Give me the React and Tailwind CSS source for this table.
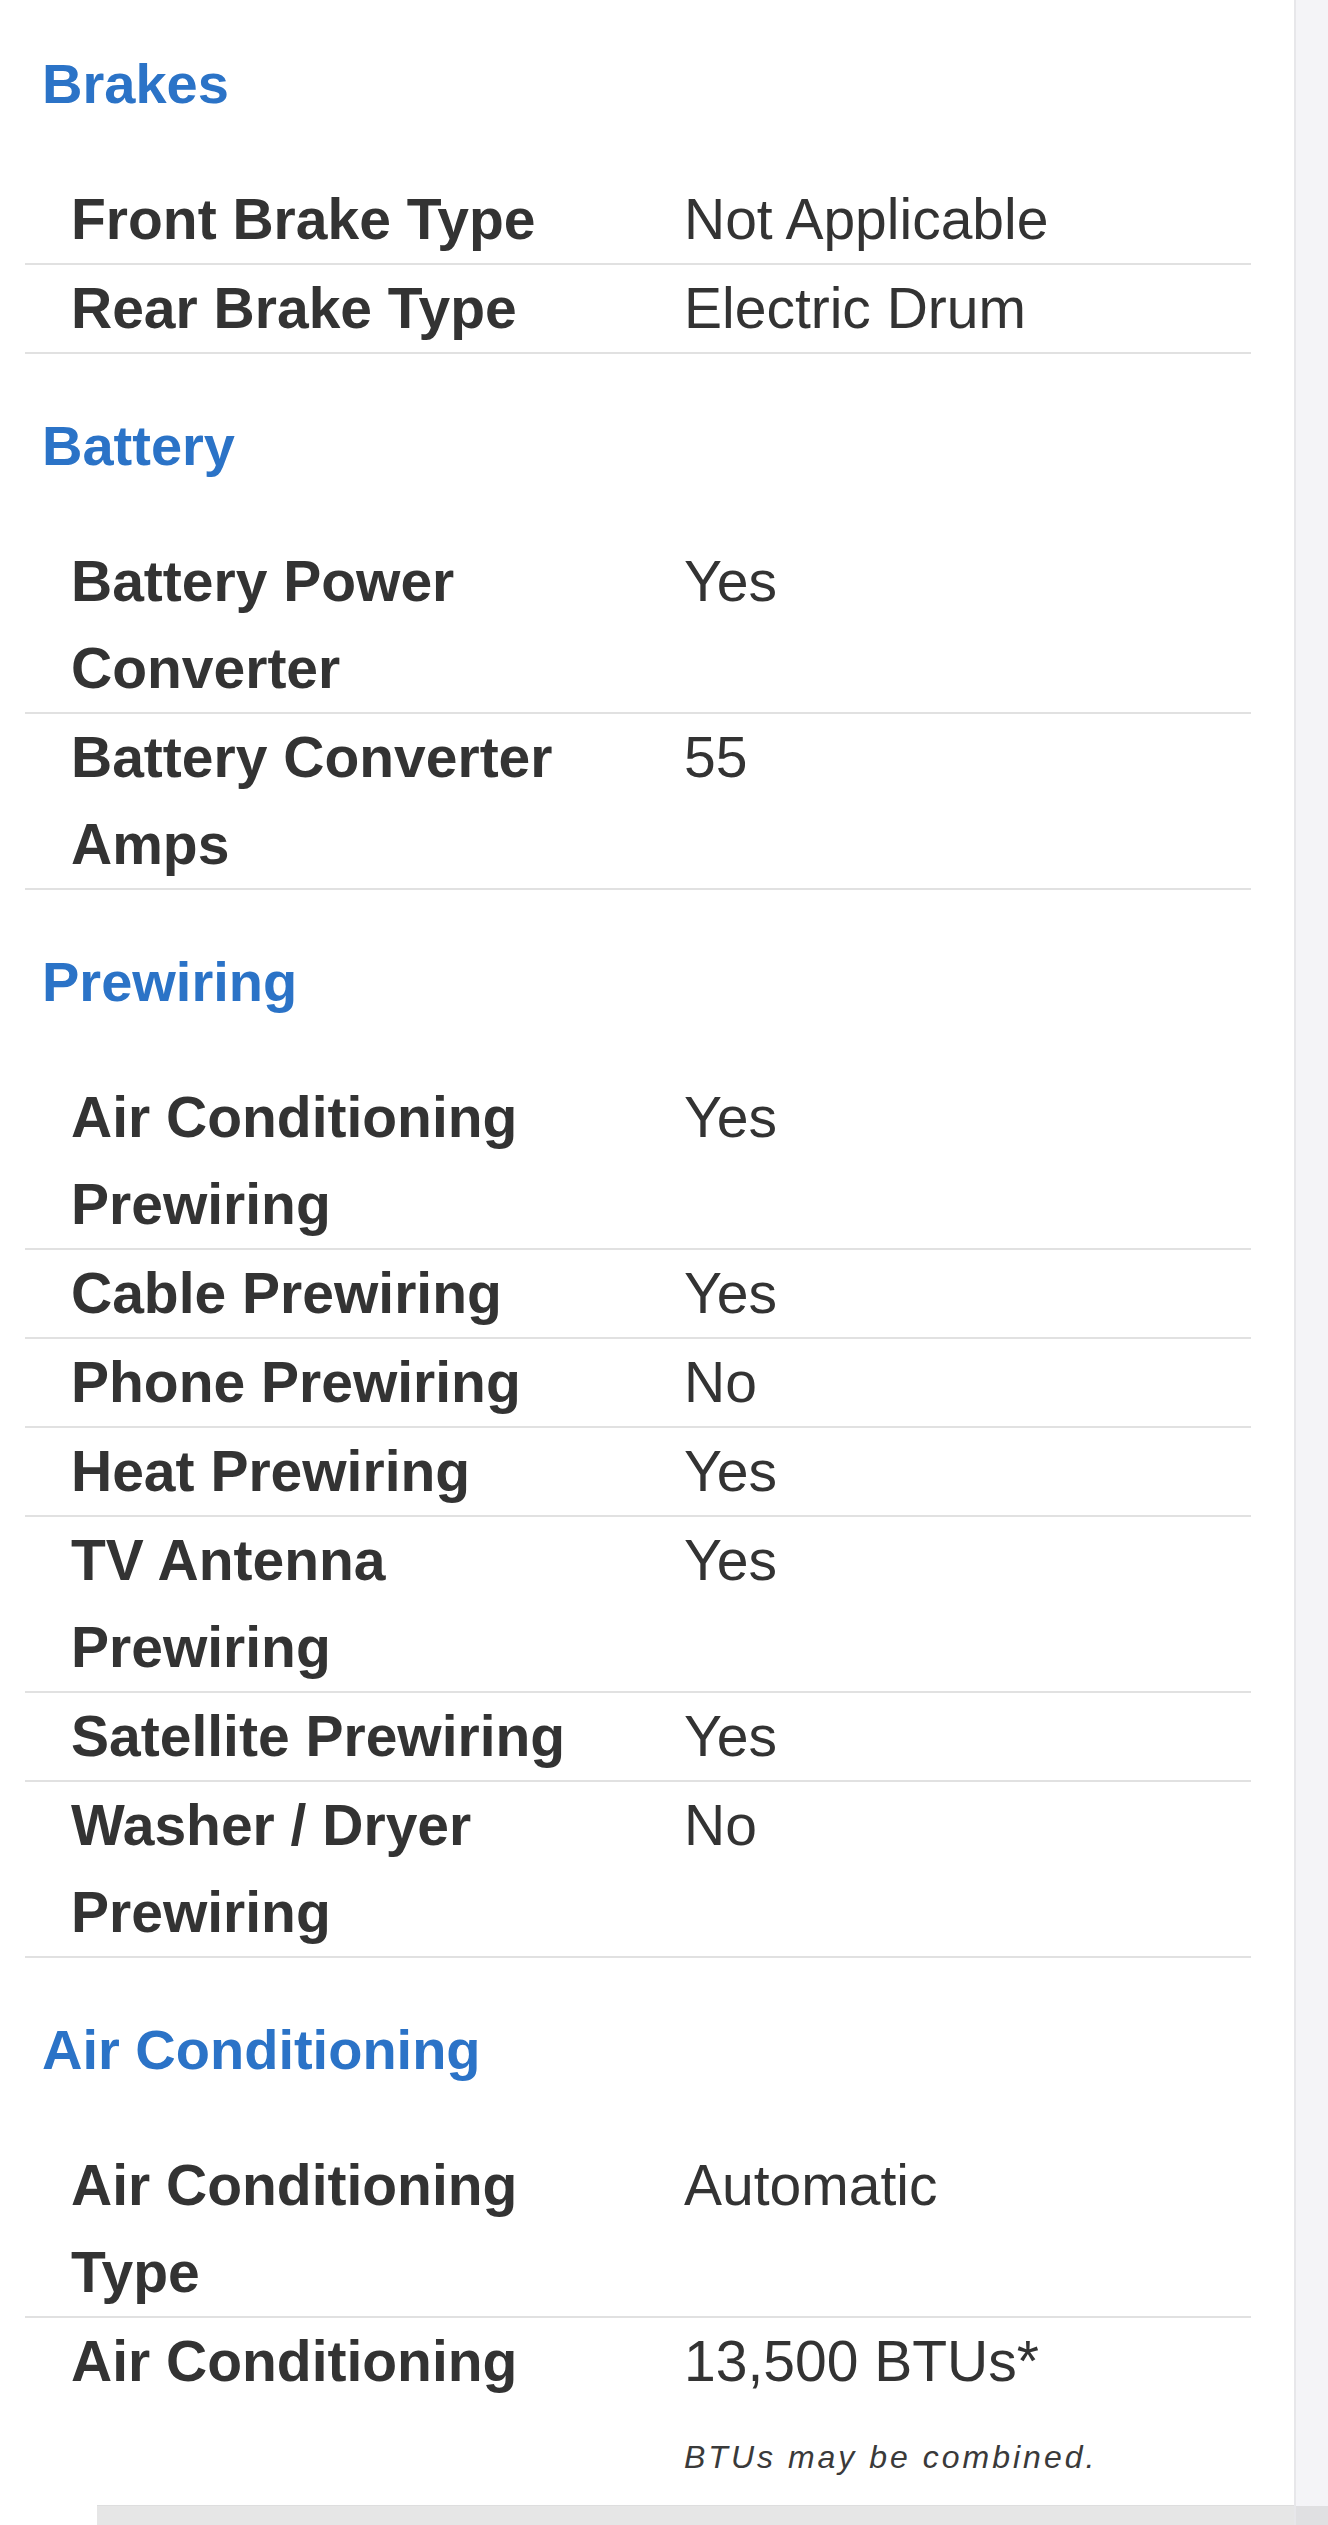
const sections = [
  {
    title: "Brakes",
    rows: [
      { label: "Front Brake Type", value: "Not Applicable" },
      { label: "Rear Brake Type", value: "Electric Drum" },
    ],
  },
  {
    title: "Battery",
    rows: [
      { label: "Battery Power Converter", value: "Yes" },
      { label: "Battery Converter Amps", value: "55" },
    ],
  },
  {
    title: "Prewiring",
    rows: [
      { label: "Air Conditioning Prewiring", value: "Yes" },
      { label: "Cable Prewiring", value: "Yes" },
      { label: "Phone Prewiring", value: "No" },
      { label: "Heat Prewiring", value: "Yes" },
      { label: "TV Antenna Prewiring", value: "Yes" },
      { label: "Satellite Prewiring", value: "Yes" },
      { label: "Washer / Dryer Prewiring", value: "No" },
    ],
  },
  {
    title: "Air Conditioning",
    rows: [
      { label: "Air Conditioning Type", value: "Automatic" },
      { label: "Air Conditioning", value: "13,500 BTUs*", note: "BTUs may be combined." },
    ],
  },
];

function SpecRow({ row, last }) {
  return (
    <div
      className={
        last
          ? "grid grid-cols-2 pb-[28px]"
          : "grid grid-cols-2 border-b-2 border-[#e1e1e1]"
      }
    >
      <div className="pl-[46px] pr-[46px] text-[57px] font-bold leading-[87px] text-[#333333]">
        {row.label}
      </div>
      <div className="pl-[46px] pr-[20px] text-[57px] leading-[87px] text-[#333333]">
        {row.value}
        {row.note && (
          <p className="mt-[32px] text-[32px] italic leading-[40px] tracking-[3px] text-[#3a3a3a]">
            {row.note}
          </p>
        )}
      </div>
    </div>
  );
}

export default function App() {
  return (
    <div className="flex h-[2525px] overflow-hidden bg-white font-['Liberation_Sans',Arial,sans-serif]">
      {/* Spec tables */}
      <div className="flex flex-1 flex-col">
        <div className="ml-[25px] mr-[43px]">
          {sections.map((section, i) => (
            <section key={section.title}>
              <h2
                className={
                  i === 0
                    ? "pl-[17px] pt-[50px] pb-[58px] text-[56px] font-bold leading-[68px] text-[#2b73c7]"
                    : "pl-[17px] pt-[58px] pb-[58px] text-[56px] font-bold leading-[68px] text-[#2b73c7]"
                }
              >
                {section.title}
              </h2>
              {section.rows.map((row, j) => (
                <SpecRow
                  key={row.label + j}
                  row={row}
                  last={i === sections.length - 1 && j === section.rows.length - 1}
                />
              ))}
            </section>
          ))}
        </div>
        {/* bottom bar peeking in */}
        <div className="ml-[97px] flex-1 border-t border-[#dedede] bg-[#e6e6e6]" />
      </div>

      {/* right side panel edge */}
      <div className="flex w-[34px] flex-col border-l-2 border-[#e7e7ea]">
        <div className="flex-1 bg-[#f4f4f7]" />
        <div className="h-[19px] bg-[#e0e0e2]" />
      </div>
    </div>
  );
}
